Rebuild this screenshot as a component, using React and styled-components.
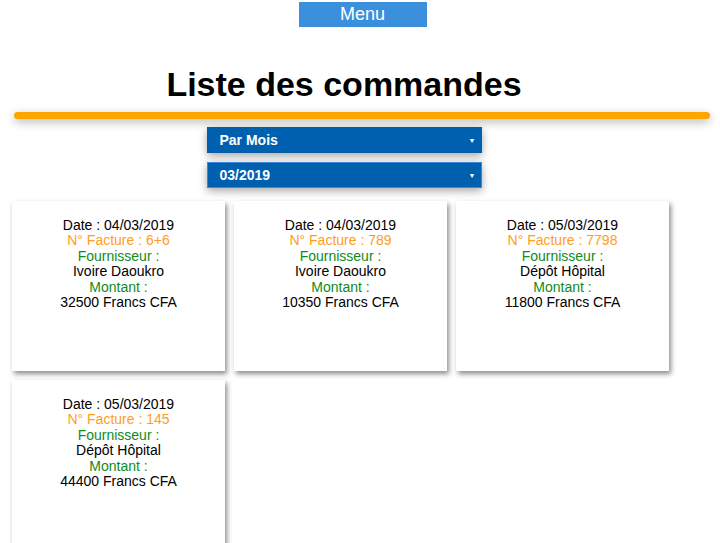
import styled, { createGlobalStyle } from "styled-components";

const Global = createGlobalStyle`
    body {
        margin: 0;
        font-family: "Liberation Sans", Arial, sans-serif;
        background: #fff;
    }
`;

const Page = styled.div`
    display: flex;
    flex-direction: column;
    align-items: center;
    padding-top: 2px;
`;

const MenuButton = styled.button`
    width: 128px;
    height: 25px;
    margin-left: 5px;
    border: none;
    background: #3b90de;
    color: #fff;
    font-family: inherit;
    font-size: 18px;
    padding: 0;
    cursor: pointer;
`;

const Header = styled.div`
    align-self: stretch;
    display: flex;
    flex-direction: column;
    align-items: center;
    padding-right: 32px;
`;

const Title = styled.h1`
    margin: 39px 0 0;
    font-size: 34px;
    font-weight: bold;
    color: #000;
    line-height: 37px;
`;

const Bar = styled.div`
    align-self: stretch;
    margin: 9px 10px 0 14px;
    height: 7px;
    border-radius: 4px;
    background: #ffa500;
    box-shadow: 0 3px 10px rgba(0, 0, 0, 0.3);
`;

const Selects = styled.div`
    display: flex;
    flex-direction: column;
    gap: 9px;
    margin-top: 8px;
`;

const Select = styled.div`
    width: 275px;
    height: 26px;
    box-sizing: border-box;
    background: #0060b0;
    border: 1px solid ${p => (p.$active ? "#3f87d8" : "#0a5aa5")};
    color: #fff;
    font-weight: bold;
    font-size: 14px;
    display: flex;
    align-items: center;
    justify-content: space-between;
    padding: 0 5px 0 12px;
    box-shadow: 0 3px 8px rgba(0, 0, 0, 0.35);

    &::after {
        content: "▼";
        font-size: 7px;
    }
`;

const Grid = styled.div`
    align-self: stretch;
    display: flex;
    flex-wrap: wrap;
    gap: 9px;
    padding: 13px 0 0 12px;
`;

const Card = styled.div`
    width: 213px;
    height: 170px;
    box-sizing: border-box;
    padding-top: 17px;
    background: #fff;
    box-shadow: 2px 3px 5px rgba(0, 0, 0, 0.45);
    text-align: center;
    font-size: 14px;
    line-height: 15.4px;
`;

const Line = styled.div`
    color: ${p => p.$color || "#000"};
`;

const orders = [
    { date: "04/03/2019", num: "6+6", supplier: "Ivoire Daoukro", amount: "32500" },
    { date: "04/03/2019", num: "789", supplier: "Ivoire Daoukro", amount: "10350" },
    { date: "05/03/2019", num: "7798", supplier: "Dépôt Hôpital", amount: "11800" },
    { date: "05/03/2019", num: "145", supplier: "Dépôt Hôpital", amount: "44400" },
];

export default function App() {
    return (
        <>
            <Global />
            <Page>
                <MenuButton>Menu</MenuButton>
                <Header>
                    <Title>Liste des commandes</Title>
                </Header>
                <Bar />
                <Header>
                    <Selects>
                        <Select>Par Mois</Select>
                        <Select $active>03/2019</Select>
                    </Selects>
                </Header>
                <Grid>
                    {orders.map((o, i) => (
                        <Card key={i}>
                            <Line>Date : {o.date}</Line>
                            <Line $color="#ff9d1e">N° Facture : {o.num}</Line>
                            <Line $color="#118a1e">Fournisseur :</Line>
                            <Line>{o.supplier}</Line>
                            <Line $color="#118a1e">Montant :</Line>
                            <Line>{o.amount} Francs CFA</Line>
                        </Card>
                    ))}
                </Grid>
            </Page>
        </>
    );
}
